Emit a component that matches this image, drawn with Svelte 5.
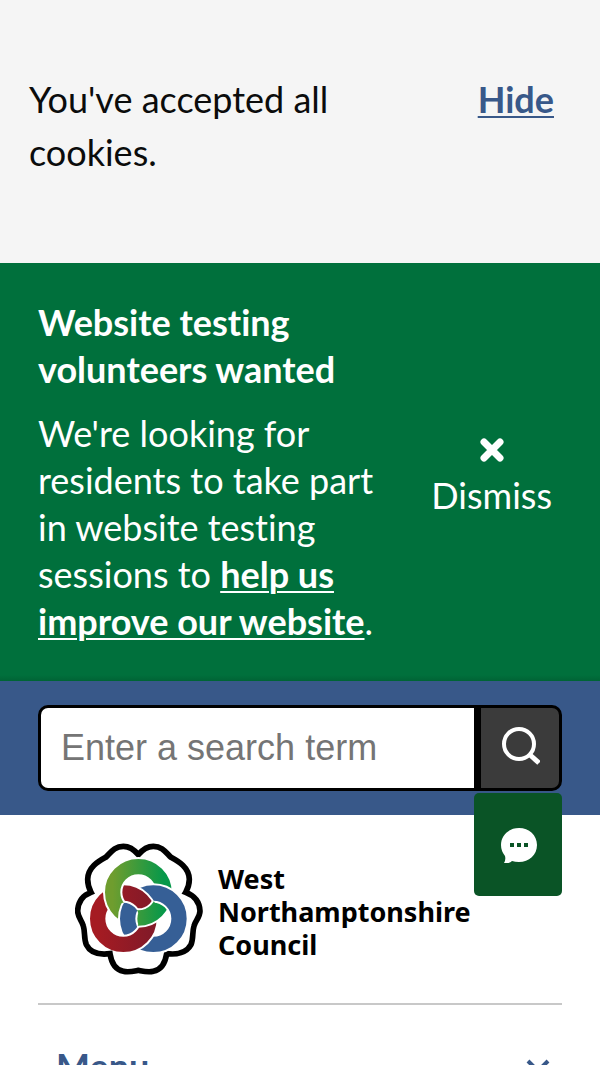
<script>
    let cookieBanner = true;
    let notice = true;
    let menuOpen = false;
    let term = '';
</script>

<svelte:head>
    <title>West Northamptonshire Council</title>
</svelte:head>

{#if cookieBanner}
    <div class="cookie-banner">
        <p>You've accepted all cookies.</p>
        <a href="#hide" on:click|preventDefault={() => cookieBanner = false}>Hide</a>
    </div>
{/if}

{#if notice}
    <section class="notice">
        <div class="notice-text">
            <h2>Website testing volunteers wanted</h2>
            <p>We're looking for residents to take part in website testing sessions to <a href="#testing">help us improve our website</a>.</p>
        </div>
        <button class="dismiss" on:click={() => notice = false}>
            <svg viewBox="0 0 24 24" width="24" height="24" aria-hidden="true">
                <path d="M4 4L20 20M20 4L4 20" stroke="#fff" stroke-width="7" stroke-linecap="round" />
            </svg>
            <span>Dismiss</span>
        </button>
    </section>
{/if}

<div class="search-bar">
    <form class="search" on:submit|preventDefault>
        <input type="text" bind:value={term} placeholder="Enter a search term" aria-label="Enter a search term">
        <button class="search-btn" aria-label="Search">
            <svg viewBox="0 0 40 44" width="40" height="44" fill="none" stroke="#fff" aria-hidden="true">
                <circle cx="19" cy="18" r="15" stroke-width="4" />
                <path d="M29 28L39 37" stroke-width="5" />
            </svg>
        </button>
        <button type="button" class="chat" aria-label="Open chat">
            <svg viewBox="0 0 38 36" width="38" height="36" aria-hidden="true">
                <path d="M20 1C30 1 38 8 38 18S30 35 20 35Q16 35 13 34Q10 37 5 36Q7 33 6 29Q2 24 2 18C2 8 10 1 20 1Z" fill="#fff" />
                <path d="M11 16h4v4h-4zM18 16h4v4h-4zM25 16h4v4h-4z" fill="#0a5426" />
            </svg>
        </button>
    </form>
</div>

<header>
    <a class="logo" href="#home">
        <svg viewBox="45 39 384 396" width="128" height="132" aria-hidden="true">
            <defs>
                <linearGradient id="green" x1="0" x2="1">
                    <stop offset="0" stop-color="#6f9d2e" />
                    <stop offset="1" stop-color="#06984a" />
                </linearGradient>
                <linearGradient id="red" x1="0" x2="1">
                    <stop offset="0" stop-color="#a51b22" />
                    <stop offset="1" stop-color="#841a28" />
                </linearGradient>
                <mask id="under-red" maskUnits="userSpaceOnUse" x="45" y="39" width="384" height="396">
                    <rect x="45" y="39" width="384" height="396" fill="#fff" />
                    <circle cx="190" cy="266" r="77" fill="none" stroke="#000" stroke-width="58" />
                </mask>
            </defs>
            <path d="M235 74C220 56 208 49 190 49C162 49 152 68 137 82C115 94 84 112 83 148Q83 168 93 187C66 197 54 217 53 243C53 262 66 272 70 288C76 308 71 325 79 344C92 370 120 375 150 371C154 398 164 419 190 424C206 428 220 424 235 421C250 424 264 428 280 424C306 419 316 398 320 371C350 375 380 368 393 344C401 325 396 308 402 288C406 272 420 262 420 243C419 217 404 197 377 187Q388 168 388 148C387 112 355 94 333 82C318 68 308 49 280 49C262 49 250 56 235 74Z" fill="#fff" stroke="#000" stroke-width="17" stroke-linejoin="miter" />
            <g fill="none">
                <circle cx="190" cy="266" r="77" stroke="url(#red)" stroke-width="46" />
                <circle cx="235" cy="187" r="77" stroke="#fff" stroke-width="58" />
                <circle cx="235" cy="187" r="77" stroke="url(#green)" stroke-width="46" />
                <g mask="url(#under-red)">
                    <circle cx="280" cy="266" r="77" stroke="#fff" stroke-width="58" />
                    <circle cx="280" cy="266" r="77" stroke="#365f96" stroke-width="46" />
                </g>
            </g>
        </svg>
        <span>West Northamptonshire Council</span>
    </a>
    <button class="menu" aria-expanded={menuOpen} on:click={() => menuOpen = !menuOpen}>
        <span>Menu</span>
        <svg viewBox="0 0 24 16" width="24" height="16" aria-hidden="true">
            <path d="M2 2L12 12L22 2" fill="none" stroke="#385889" stroke-width="4" />
        </svg>
    </button>
</header>

<style>
    :global(body) {
        background: #fff;
        font-family: Lato, "Open Sans", sans-serif;
        font-size: 36px;
        font-variant-ligatures: none;
        line-height: 47px;
    }

    h2, p {
        margin: 0;
        font-size: 36px;
    }

    button {
        border: 0;
        padding: 0;
        font-family: inherit;
        font-size: 36px;
        line-height: 47px;
        cursor: pointer;
    }

    svg {
        display: block;
        flex: none;
    }

    .cookie-banner {
        display: flex;
        justify-content: space-between;
        gap: 120px;
        padding: 73px 46px 84px 29px;
        background: #f5f5f5;
        color: #0b0c0c;
        line-height: 53px;
    }

    .cookie-banner a {
        color: #385889;
        font-weight: bold;
    }

    a {
        text-decoration-thickness: 2px;
        text-underline-offset: 3px;
    }

    .notice {
        display: flex;
        align-items: center;
        justify-content: space-between;
        gap: 48px;
        padding: 36px 48px 36px 38px;
        background: linear-gradient(#00703c, #00703c calc(100% - 6px), #006335);
        color: #fff;
    }

    .notice-text {
        display: flex;
        flex-direction: column;
        gap: 17px;
    }

    .notice a {
        color: #fff;
        font-weight: bold;
    }

    .dismiss {
        display: flex;
        flex-direction: column;
        align-items: center;
        gap: 10px;
        padding-top: 12px;
        background: none;
        color: #fff;
    }

    .search-bar {
        padding: 24px 38px;
        background: #385889;
    }

    .search {
        position: relative;
        display: flex;
        height: 80px;
        border: 3px solid #000;
        border-radius: 10px;
        background: #000;
    }

    input {
        flex: 1;
        min-width: 0;
        box-sizing: border-box;
        padding: 0 20px;
        border: 0;
        border-radius: 7px 0 0 7px;
        background: #fff;
        font-family: "Liberation Sans", Arial, sans-serif;
        font-size: 36px;
    }

    input::placeholder {
        color: #757575;
    }

    .search-btn {
        display: flex;
        align-items: center;
        justify-content: center;
        width: 78px;
        margin-left: 7px;
        border-radius: 0 7px 7px 0;
        background: #3b3b3b;
    }

    .chat {
        position: absolute;
        top: 85px;
        right: -3px;
        display: flex;
        align-items: center;
        justify-content: center;
        width: 88px;
        height: 103px;
        border-radius: 5px;
        background: #0a5426;
    }

    header {
        padding: 28px 38px 0;
    }

    .logo {
        display: flex;
        align-items: center;
        gap: 15px;
        padding: 0 37px 28px;
        border-bottom: 2px solid #c8c8c8;
        color: #000;
        font-family: "Noto Sans", "Open Sans", sans-serif;
        font-size: 27px;
        font-weight: bold;
        line-height: 33px;
        text-decoration: none;
    }

    .logo span {
        width: min-content;
        padding-top: 4px;
    }

    .menu {
        display: flex;
        align-items: center;
        justify-content: space-between;
        width: 100%;
        padding: 38px 12px 38px 18px;
        background: none;
        color: #385889;
        font-weight: bold;
    }
</style>
